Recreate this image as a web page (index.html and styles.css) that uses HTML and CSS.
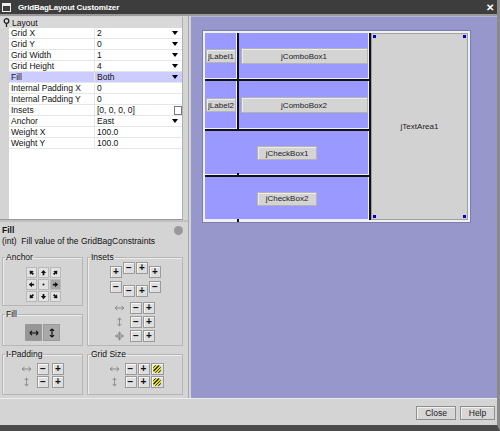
FILE: index.html
```html
<!DOCTYPE html>
<html lang="en">
<head>
    <meta charset="UTF-8">
    <title>GridBagLayout Customizer</title>
    <link rel="stylesheet" href="styles.css">
</head>
<body>
    <div class="window">
        <div class="titlebar">
            <span class="win-icon"></span>
            <span class="title">GridBagLayout Customizer</span>
            <span class="win-close">&#x2715;</span>
        </div>

        <div class="main">
            <div class="left">
                <div class="props">
                    <div class="prop-head">
                        <svg class="pin" width="7" height="9" viewBox="0 0 7 9"><circle cx="3.5" cy="3" r="2.3" fill="none" stroke="#222" stroke-width="1.3"/><line x1="3.5" y1="5" x2="3.5" y2="9" stroke="#222" stroke-width="1.3"/></svg>
                        Layout
                    </div>
                    <div class="prop-row"><span class="prop-name">Grid X</span><span class="prop-value">2</span><i class="drop"></i></div>
                    <div class="prop-row"><span class="prop-name">Grid Y</span><span class="prop-value">0</span><i class="drop"></i></div>
                    <div class="prop-row"><span class="prop-name">Grid Width</span><span class="prop-value">1</span><i class="drop"></i></div>
                    <div class="prop-row"><span class="prop-name">Grid Height</span><span class="prop-value">4</span><i class="drop"></i></div>
                    <div class="prop-row selected"><span class="prop-name">Fill</span><span class="prop-value">Both</span><i class="drop"></i></div>
                    <div class="prop-row"><span class="prop-name">Internal Padding X</span><span class="prop-value">0</span></div>
                    <div class="prop-row"><span class="prop-name">Internal Padding Y</span><span class="prop-value">0</span></div>
                    <div class="prop-row"><span class="prop-name">Insets</span><span class="prop-value">[0, 0, 0, 0]</span><i class="dots"></i></div>
                    <div class="prop-row"><span class="prop-name">Anchor</span><span class="prop-value">East</span><i class="drop"></i></div>
                    <div class="prop-row"><span class="prop-name">Weight X</span><span class="prop-value">100.0</span></div>
                    <div class="prop-row"><span class="prop-name">Weight Y</span><span class="prop-value">100.0</span></div>
                </div>

                <div class="desc">
                    <div class="desc-title">Fill <span class="help-dot"></span></div>
                    <div class="desc-text">(int)&nbsp; Fill value of the GridBagConstraints</div>
                </div>

                <div class="groups">
                    <fieldset class="group anchor">
                        <legend>Anchor</legend>
                        <div class="anchor-grid">
                            <span class="abtn"><svg class="arr r-nw" viewBox="0 0 8 8"><path d="M4 1 L7 4.5 L5 4.5 L5 7 L3 7 L3 4.5 L1 4.5 Z"/></svg></span>
                            <span class="abtn"><svg class="arr r-n" viewBox="0 0 8 8"><path d="M4 1 L7 4.5 L5 4.5 L5 7 L3 7 L3 4.5 L1 4.5 Z"/></svg></span>
                            <span class="abtn"><svg class="arr r-ne" viewBox="0 0 8 8"><path d="M4 1 L7 4.5 L5 4.5 L5 7 L3 7 L3 4.5 L1 4.5 Z"/></svg></span>
                            <span class="abtn"><svg class="arr r-w" viewBox="0 0 8 8"><path d="M4 1 L7 4.5 L5 4.5 L5 7 L3 7 L3 4.5 L1 4.5 Z"/></svg></span>
                            <span class="abtn"><svg class="arr" viewBox="0 0 8 8"><rect x="3" y="3" width="2" height="2"/></svg></span>
                            <span class="abtn active"><svg class="arr r-e" viewBox="0 0 8 8"><path d="M4 1 L7 4.5 L5 4.5 L5 7 L3 7 L3 4.5 L1 4.5 Z"/></svg></span>
                            <span class="abtn"><svg class="arr r-sw" viewBox="0 0 8 8"><path d="M4 1 L7 4.5 L5 4.5 L5 7 L3 7 L3 4.5 L1 4.5 Z"/></svg></span>
                            <span class="abtn"><svg class="arr r-s" viewBox="0 0 8 8"><path d="M4 1 L7 4.5 L5 4.5 L5 7 L3 7 L3 4.5 L1 4.5 Z"/></svg></span>
                            <span class="abtn"><svg class="arr r-se" viewBox="0 0 8 8"><path d="M4 1 L7 4.5 L5 4.5 L5 7 L3 7 L3 4.5 L1 4.5 Z"/></svg></span>
                        </div>
                    </fieldset>

                    <fieldset class="group insets">
                        <legend>Insets</legend>
                        <div class="cross">
                            <div class="cross-side">
                                <span class="pm">+</span>
                                <span class="pm">&minus;</span>
                            </div>
                            <div class="cross-mid">
                                <div class="pair"><span class="pm">&minus;</span><span class="pm">+</span></div>
                                <div class="pair"><span class="pm">&minus;</span><span class="pm">+</span></div>
                            </div>
                            <div class="cross-side">
                                <span class="pm">+</span>
                                <span class="pm">&minus;</span>
                            </div>
                        </div>
                        <div class="steppers">
                            <div class="step-row">
                                <svg class="hint" viewBox="0 0 11 9"><path d="M1 4.5 H10 M1 4.5 L3.5 2.5 M1 4.5 L3.5 6.5 M10 4.5 L7.5 2.5 M10 4.5 L7.5 6.5"/></svg>
                                <span class="pm">&minus;</span><span class="pm">+</span>
                            </div>
                            <div class="step-row">
                                <svg class="hint" viewBox="0 0 11 11"><path d="M5.5 1 V10 M5.5 1 L3.5 3.5 M5.5 1 L7.5 3.5 M5.5 10 L3.5 7.5 M5.5 10 L7.5 7.5"/></svg>
                                <span class="pm">&minus;</span><span class="pm">+</span>
                            </div>
                            <div class="step-row">
                                <svg class="hint" viewBox="0 0 11 11"><path d="M5.5 1 V10 M1 5.5 H10 M5.5 1 L4 2.5 M5.5 1 L7 2.5 M5.5 10 L4 8.5 M5.5 10 L7 8.5 M1 5.5 L2.5 4 M1 5.5 L2.5 7 M10 5.5 L8.5 4 M10 5.5 L8.5 7"/><circle cx="5.5" cy="5.5" r="2.5"/></svg>
                                <span class="pm">&minus;</span><span class="pm">+</span>
                            </div>
                        </div>
                    </fieldset>

                    <fieldset class="group fill">
                        <legend>Fill</legend>
                        <div class="fill-btns">
                            <span class="fbtn on"><svg viewBox="0 0 12 8"><path d="M1 4 H11 M1 4 L3.5 1.5 M1 4 L3.5 6.5 M11 4 L8.5 1.5 M11 4 L8.5 6.5"/></svg></span>
                            <span class="fbtn"><svg viewBox="0 0 8 12"><path d="M4 1 V11 M4 1 L1.5 3.5 M4 1 L6.5 3.5 M4 11 L1.5 8.5 M4 11 L6.5 8.5"/></svg></span>
                        </div>
                    </fieldset>

                    <fieldset class="group ipad">
                        <legend>I-Padding</legend>
                        <div class="steppers">
                            <div class="step-row">
                                <svg class="hint" viewBox="0 0 11 9"><path d="M1 4.5 H10 M1 4.5 L3.5 2.5 M1 4.5 L3.5 6.5 M10 4.5 L7.5 2.5 M10 4.5 L7.5 6.5"/></svg>
                                <span class="pm">&minus;</span><span class="pm">+</span>
                            </div>
                            <div class="step-row">
                                <svg class="hint" viewBox="0 0 11 11"><path d="M5.5 1 V10 M5.5 1 L3.5 3.5 M5.5 1 L7.5 3.5 M5.5 10 L3.5 7.5 M5.5 10 L7.5 7.5"/></svg>
                                <span class="pm">&minus;</span><span class="pm">+</span>
                            </div>
                        </div>
                    </fieldset>

                    <fieldset class="group gsize">
                        <legend>Grid Size</legend>
                        <div class="steppers">
                            <div class="step-row">
                                <svg class="hint" viewBox="0 0 11 9"><path d="M1 4.5 H10 M1 4.5 L3.5 2.5 M1 4.5 L3.5 6.5 M10 4.5 L7.5 2.5 M10 4.5 L7.5 6.5"/></svg>
                                <span class="pm">&minus;</span><span class="pm">+</span><span class="pm rem"><i class="hatch"></i></span>
                            </div>
                            <div class="step-row">
                                <svg class="hint" viewBox="0 0 11 11"><path d="M5.5 1 V10 M5.5 1 L3.5 3.5 M5.5 1 L7.5 3.5 M5.5 10 L3.5 7.5 M5.5 10 L7.5 7.5"/></svg>
                                <span class="pm">&minus;</span><span class="pm">+</span><span class="pm rem"><i class="hatch"></i></span>
                            </div>
                        </div>
                    </fieldset>
                </div>
            </div>

            <div class="right">
                <div class="design">
                    <div class="cell c-label1"><span class="comp label">jLabel1</span></div>
                    <div class="cell c-combo1"><span class="comp combo">jComboBox1</span></div>
                    <div class="cell c-area">
                        <span class="comp area">jTextArea1</span>
                        <i class="handle h-tl"></i><i class="handle h-tr"></i>
                        <i class="handle h-bl"></i><i class="handle h-br"></i>
                    </div>
                    <div class="cell c-label2"><span class="comp label">jLabel2</span></div>
                    <div class="cell c-combo2"><span class="comp combo">jComboBox2</span></div>
                    <div class="cell c-check1"><span class="comp check">jCheckBox1</span></div>
                    <div class="cell c-check2"><span class="comp check">jCheckBox2</span></div>
                    <i class="tick t-mid3"></i>
                    <i class="tick t-bot"></i>
                </div>
            </div>
        </div>

        <div class="footer">
            <button class="btn">Close</button>
            <button class="btn">Help</button>
        </div>
    </div>
</body>
</html>
```

FILE: styles.css
```css
:root {
    --panel: #d4d4d4;
    --title-bg: #3d3d3d;
    --lavender: #9797cc;
    --cell: #9999ff;
    --select: #ccccff;
    --btn-bg: #dedede;
    --btn-border: #9a9a9a;
}

html, body {
    margin: 0;
    padding: 0;
}
body {
    width: 500px;
    height: 431px;
    overflow: hidden;
    background-color: var(--panel);
    font-family: 'Liberation Sans', Arial, sans-serif;
    font-size: 9px;
    color: #111;
}
.window {
    display: flex;
    flex-direction: column;
    height: 431px;
    box-sizing: border-box;
    border-right: 3px solid #8a8a8a;
    border-bottom: 6px solid #4a4a4a;
}

/* title bar */
.titlebar {
    height: 14px;
    display: flex;
    align-items: center;
    background-color: var(--title-bg);
    color: white;
    border-bottom: 2px solid #9a9a9a;
    padding: 0 3px 0 2px;
}
.win-icon {
    width: 9px;
    height: 9px;
    border: 1px solid #eee;
    border-top-width: 3px;
    margin-right: 7px;
    box-sizing: border-box;
}
.title {
    font-weight: bold;
    font-size: 8px;
    letter-spacing: -0.1px;
    flex-grow: 1;
}
.win-close {
    font-size: 10px;
    font-weight: bold;
}

.main {
    display: flex;
    height: 382px;
}

/* left column */
.left {
    width: 188px;
    border-right: 1px solid #a8a8a8;
    margin-right: 2px;
    display: flex;
    flex-direction: column;
}
.props {
    height: 202px;
    margin-top: 1px;
    margin-right: 5px;
    background: linear-gradient(to right, var(--panel) 9px, white 9px);
    border-right: 1px solid #b0b0b0;
    border-bottom: 1px solid #999;
}
.prop-head {
    height: 11px;
    display: flex;
    align-items: center;
    background-color: #d9d9d9;
    padding-left: 3px;
    gap: 2px;
    font-size: 8.5px;
}
.prop-row {
    height: 11px;
    margin-left: 9px;
    display: flex;
    align-items: center;
    border-bottom: 1px solid #e6e6e6;
    box-sizing: border-box;
    font-size: 8.5px;
    position: relative;
}
.prop-row.selected {
    background-color: var(--select);
}
.prop-name {
    width: 83px;
    padding-left: 2px;
    border-right: 1px solid #e6e6e6;
    height: 100%;
    display: flex;
    align-items: center;
}
.prop-value {
    padding-left: 2px;
    flex-grow: 1;
}
.drop {
    width: 0;
    height: 0;
    border-left: 3.5px solid transparent;
    border-right: 3.5px solid transparent;
    border-top: 4px solid #000;
    margin-right: 4px;
}
.dots {
    width: 8px;
    height: 9px;
    border: 1px solid #777;
    background-color: white;
    box-sizing: border-box;
    margin-right: 0;
}

/* description */
.desc {
    height: 29px;
    border-top: 2px solid #c0c0c0;
    padding: 3px 2px 0;
    box-sizing: border-box;
    font-size: 8.5px;
}
.desc-title {
    font-weight: bold;
    display: flex;
    align-items: center;
    justify-content: space-between;
    padding-right: 3px;
    margin-bottom: 1px;
}
.help-dot {
    width: 9px;
    height: 9px;
    border-radius: 50%;
    background-color: #999;
}

/* option groups */
.groups {
    display: grid;
    grid-template-columns: 81px 96px;
    grid-template-rows: 53px 36px 45px;
    gap: 4px;
    padding: 4px 0 0 2px;
}
.group {
    margin: 0;
    padding: 0;
    border: 1px solid #b6b6b6;
    box-shadow: inset 1px 1px 0 #ececec;
    min-width: 0;
    display: flex;
    flex-direction: column;
    align-items: center;
}
.group legend {
    font-size: 8.5px;
    padding: 0 1px;
    margin-left: 2px;
    line-height: 8px;
}
.insets {
    grid-row: 1 / 3;
    grid-column: 2;
}
.anchor { grid-row: 1; grid-column: 1; }
.fill { grid-row: 2; grid-column: 1; }

.anchor-grid {
    display: grid;
    grid-template-columns: repeat(3, 11px);
    grid-auto-rows: 11px;
    gap: 1px;
    margin-top: 6px;
    padding: 0 0 0 1px;
}
.abtn {
    background-color: #e2e2e2;
    border: 1px solid #b8b8b8;
    box-sizing: border-box;
    display: flex;
    align-items: center;
    justify-content: center;
}
.abtn.active {
    background-color: #a8a8a8;
}
.arr {
    width: 7px;
    height: 7px;
    fill: #111;
}
.r-n { transform: rotate(0deg); }
.r-ne { transform: rotate(45deg); }
.r-e { transform: rotate(90deg); }
.r-se { transform: rotate(135deg); }
.r-s { transform: rotate(180deg); }
.r-sw { transform: rotate(225deg); }
.r-w { transform: rotate(270deg); }
.r-nw { transform: rotate(315deg); }

.fill-btns {
    display: flex;
    gap: 1px;
    margin-top: 6px;
}
.fbtn {
    width: 17px;
    height: 17px;
    background-color: #a9a9a9;
    border: 1px solid #999;
    box-sizing: border-box;
    display: flex;
    align-items: center;
    justify-content: center;
}
.fbtn.on {
    background-color: #969696;
}
.fbtn svg {
    width: 10px;
    height: 10px;
    fill: none;
    stroke: #111;
    stroke-width: 1.4;
}

.pm {
    width: 12px;
    height: 12px;
    background-color: var(--btn-bg);
    border: 1px solid var(--btn-border);
    box-shadow: inset 1px 1px 0 #f6f6f6;
    box-sizing: border-box;
    display: flex;
    align-items: center;
    justify-content: center;
    font-weight: bold;
    font-size: 10px;
    line-height: 1;
}

.cross {
    display: flex;
    gap: 1px;
    margin-top: 1px;
    margin-left: 1px;
}
.cross-side {
    display: flex;
    flex-direction: column;
    gap: 3px;
    margin-top: 4px;
}
.cross-mid {
    height: 35px;
    display: flex;
    flex-direction: column;
    justify-content: space-between;
}
.pair {
    display: flex;
    gap: 1px;
}

.steppers {
    display: flex;
    flex-direction: column;
    gap: 2px;
}
.insets .steppers {
    margin-top: 5px;
    margin-left: -1px;
}
.ipad .steppers,
.gsize .steppers {
    margin-top: 5px;
    gap: 1px;
}
.step-row {
    display: flex;
    align-items: center;
    gap: 1px;
}
.hint {
    width: 11px;
    height: 10px;
    margin-right: 4px;
    fill: none;
    stroke: #8a8a8a;
    stroke-width: 1;
}
.ipad .step-row .pm + .pm {
    margin-left: 2px;
}
.gsize .step-row {
    margin-left: 2px;
}
.rem {
    width: 13px;
}
.hatch {
    width: 8px;
    height: 8px;
    border-radius: 50%;
    background: repeating-linear-gradient(135deg, #e8e000 0 1.5px, #333 1.5px 2.5px);
}

/* design area */
.right {
    flex-grow: 1;
    background-color: var(--lavender);
    padding: 14px 0 0 12px;
    border-top: 1px solid #b5b5d6;
    box-sizing: border-box;
}
.design {
    width: 263px;
    display: grid;
    grid-template-columns: 32px 130px 97px;
    grid-template-rows: 46px 48px 44px 43px;
    gap: 2px;
    background-color: #111;
    border: 2px solid #f0f0f0;
    outline: 1px solid #7c7cae;
    position: relative;
}
.cell {
    background-color: var(--cell);
    box-shadow: inset -1px -1px 0 #eeeeff;
    display: flex;
    align-items: center;
    justify-content: center;
    position: relative;
}
.c-area {
    grid-column: 3;
    grid-row: 1 / 5;
    background-color: #d2d2d2;
    box-shadow: none;
    border: 1px solid #a0a0a0;
}
.c-check1 {
    grid-column: 1 / 3;
    grid-row: 3;
}
.c-check2 {
    grid-column: 1 / 3;
    grid-row: 4;
}
.comp {
    background-color: #d4d4d4;
    border: 1px solid #b4b4b4;
    box-shadow: inset 1px 1px 0 #ededed;
    box-sizing: border-box;
    display: flex;
    align-items: center;
    justify-content: center;
    font-size: 8px;
    color: #222;
}
.label {
    width: 30px;
    height: 14px;
}
.combo {
    width: 127px;
    height: 16px;
}
.check {
    width: 60px;
    height: 14px;
}
.area {
    background: none;
    border: none;
    box-shadow: none;
}
.handle {
    position: absolute;
    width: 3px;
    height: 3px;
    background-color: #0000cc;
}
.h-tl { top: 1px; left: 1px; }
.h-tr { top: 1px; right: 1px; }
.h-bl { bottom: 1px; left: 1px; }
.h-br { bottom: 1px; right: 1px; }
.tick {
    position: absolute;
    width: 2px;
    height: 3px;
    background-color: #111;
    left: 32px;
}
.t-mid3 { top: 140px; }
.t-bot { bottom: -2px; }

/* footer */
.footer {
    flex-grow: 1;
    display: flex;
    justify-content: flex-end;
    align-items: center;
    gap: 4px;
    padding-right: 2px;
    border-top: 1px solid #ececec;
}
.btn {
    height: 14px;
    padding: 0;
    background-color: #d6d6d6;
    border: 1px solid #8e8e8e;
    box-shadow: inset 1px 1px 0 #f2f2f2;
    font-family: 'Liberation Sans', Arial, sans-serif;
    font-size: 8.5px;
    color: #222;
    width: 40px;
    margin-top: 2px;
}
.btn + .btn {
    width: 35px;
}
```
